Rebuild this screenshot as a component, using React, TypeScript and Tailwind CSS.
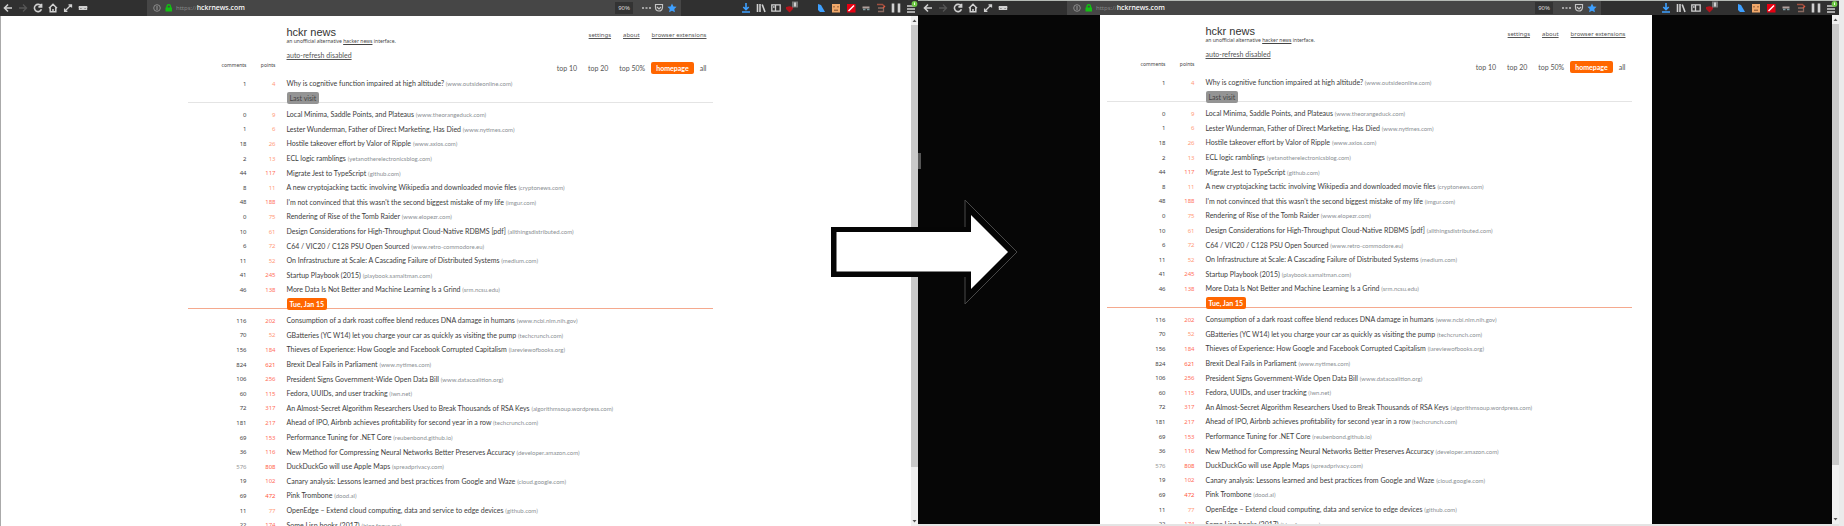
import React from "react";

type Story = [comments: number, points: number, title: string, site: string];

const fresh: Story[] = [
  [1, 4, "Why is cognitive function impaired at high altitude?", "www.outsideonline.com"],
];

const today: Story[] = [
  [0, 9, "Local Minima, Saddle Points, and Plateaus", "www.theorangeduck.com"],
  [1, 6, "Lester Wunderman, Father of Direct Marketing, Has Died", "www.nytimes.com"],
  [18, 26, "Hostile takeover effort by Valor of Ripple", "www.axios.com"],
  [2, 13, "ECL logic ramblings", "yetanotherelectronicsblog.com"],
  [44, 117, "Migrate Jest to TypeScript", "github.com"],
  [8, 11, "A new cryptojacking tactic involving Wikipedia and downloaded movie files", "cryptonews.com"],
  [48, 188, "I'm not convinced that this wasn't the second biggest mistake of my life", "imgur.com"],
  [0, 75, "Rendering of Rise of the Tomb Raider", "www.elopezr.com"],
  [10, 61, "Design Considerations for High-Throughput Cloud-Native RDBMS [pdf]", "allthingsdistributed.com"],
  [6, 72, "C64 / VIC20 / C128 PSU Open Sourced", "www.retro-commodore.eu"],
  [11, 52, "On Infrastructure at Scale: A Cascading Failure of Distributed Systems", "medium.com"],
  [41, 245, "Startup Playbook (2015)", "playbook.samaltman.com"],
  [46, 138, "More Data Is Not Better and Machine Learning Is a Grind", "srm.ncsu.edu"],
];

const tuesday: Story[] = [
  [116, 202, "Consumption of a dark roast coffee blend reduces DNA damage in humans", "www.ncbi.nlm.nih.gov"],
  [70, 52, "GBatteries (YC W14) let you charge your car as quickly as visiting the pump", "techcrunch.com"],
  [156, 184, "Thieves of Experience: How Google and Facebook Corrupted Capitalism", "lareviewofbooks.org"],
  [824, 621, "Brexit Deal Fails in Parliament", "www.nytimes.com"],
  [106, 256, "President Signs Government-Wide Open Data Bill", "www.datacoalition.org"],
  [60, 115, "Fedora, UUIDs, and user tracking", "lwn.net"],
  [72, 317, "An Almost-Secret Algorithm Researchers Used to Break Thousands of RSA Keys", "algorithmsoup.wordpress.com"],
  [181, 217, "Ahead of IPO, Airbnb achieves profitability for second year in a row", "techcrunch.com"],
  [69, 153, "Performance Tuning for .NET Core", "reubenbond.github.io"],
  [36, 116, "New Method for Compressing Neural Networks Better Preserves Accuracy", "developer.amazon.com"],
  [576, 808, "DuckDuckGo will use Apple Maps", "spreadprivacy.com"],
  [19, 102, "Canary analysis: Lessons learned and best practices from Google and Waze", "cloud.google.com"],
  [69, 472, "Pink Trombone", "dood.al"],
  [11, 77, "OpenEdge – Extend cloud computing, data and service to edge devices", "github.com"],
  [22, 174, "Some Lisp books (2017)", "blog.fogus.me"],
];

function pointsColor(points: number) {
  if (points > 400) return "text-[#ff5a3c]";
  if (points > 100) return "text-[#ff6f5c]";
  return "text-[#ff9a78]";
}

function Slot({ label, children }: { label: string; children?: React.ReactNode }) {
  return (
    <button aria-label={label} className="flex h-full w-[15px] shrink-0 items-center justify-center">
      <svg viewBox="0 0 10 10" className="size-[10px] overflow-visible" fill="none" stroke="#d0d0d0" strokeWidth="1.3">
        {children}
      </svg>
    </button>
  );
}

function Toolbar({ className }: { className: string }) {
  return (
    <div className={`flex shrink-0 items-center bg-[#303030] ${className}`}>
      <Slot label="Back"><path d="M9 5H1.5M5 1.5 1.5 5 5 8.5" strokeWidth="1.6" /></Slot>
      <Slot label="Forward"><path d="M1 5h7.5M5 1.5 8.5 5 5 8.5" stroke="#555" /></Slot>
      <Slot label="Reload"><path d="M8 3A3.6 3.6 0 1 0 8.4 6.2M8.6.8v3.1H5.4" strokeWidth="1.6" /></Slot>
      <Slot label="Home"><path d="M1 5.2 5 1.3l4 3.9M2.2 4.5v4.3h5.6V4.5M5 9V6" strokeWidth="1.5" /></Slot>
      <Slot label="Full screen"><path d="M2 8l6-6M5.5 1.8h3v2.8M1.6 5.6v2.8h2.8" strokeWidth="1.3" /></Slot>
      <Slot label="Reader"><path d="M1.5 3.8h2.8v2.4H1.5zM5.7 3.8h2.8v2.4H5.7zM.6 4.4h8.8" strokeWidth="1.4" /></Slot>
      <div className="mx-[57px] flex h-full min-w-0 flex-1 items-center bg-[#464646]">
        <svg viewBox="0 0 24 12" className="ml-[5px] h-3 w-6 shrink-0">
          <circle cx="5" cy="6" r="3.3" fill="none" stroke="#8c8c8c" />
          <path d="M5 4v4" stroke="#999" />
          <path d="M13.500 5.500h6.500v4h-6.500z" fill="#12c112" />
          <path d="M15 6V4.500a1.700 1.700 0 0 1 3.500 0V6" fill="none" stroke="#12c112" strokeWidth="1.400" />
        </svg>
        <input
          aria-label="Address"
          readOnly
          value="hckrnews.com"
          className="order-2 h-3 min-w-0 flex-1 bg-transparent font-['Noto_Sans',sans-serif] text-[7px] leading-3 font-medium text-white outline-none"
        />
        <span className="order-1 font-['Noto_Sans',sans-serif] text-[6px] leading-3 text-[#858585]">https://</span>
        <span className="order-3 mr-2 bg-[#333] px-[3px] font-['Noto_Sans',sans-serif] text-[6px] leading-3 text-[#d8d8d8]">90%</span>
        <svg viewBox="0 0 40 12" className="order-4 h-3 w-10 shrink-0">
          <path d="M1 6h2M4.500 6h2M8 6h2" stroke="#c4c4c4" strokeWidth="1.600" />
          <path d="M14.500 2.500h7v3a3.500 3.500 0 0 1-7 0zM16 5l2 2 2-2" fill="none" stroke="#c4c4c4" strokeWidth="1.200" />
          <path d="m31 1.500 1.400 2.900 3.200.4-2.300 2.200.6 3.200-2.900-1.500-2.900 1.500.6-3.200-2.300-2.200 3.200-.4z" fill="#3ea0ff" />
        </svg>
      </div>
      <Slot label="Downloads"><path d="M5 0v6M2.300 4 5 6.600 7.700 4M1 9h8" stroke="#3ea0ff" strokeWidth="1.600" /></Slot>
      <Slot label="Library"><path d="M1.500 1v8M4 1v8M6.200 1.500 9 9" strokeWidth="1.600" /></Slot>
      <Slot label="Sidebar"><path d="M.8 1.800h8.400v6.400H.8zM4.500 2v6M2 4h1.500" /></Slot>
      <Slot label="Content blocker">
        <path d="M0 4l3.500-.8L7 4v2L3.500 9.500 0 6z" fill="#b3131b" stroke="none" />
        <path d="M6-1.500h6v6H6z" fill="#777" stroke="none" />
        <path d="M9-.5v4" stroke="#fff" />
      </Slot>
      <span className="w-[15px] shrink-0" />
      <Slot label="Tagging"><path d="M2 1l3 1 4 7H4L2 7z" fill="#3ea0ff" stroke="none" /></Slot>
      <Slot label="Monkey">
        <path d="M1 1h8v8.500H1z" fill="#f0a86a" stroke="none" />
        <path d="M3 3v1.500M7 3v1.500M3 7.200h4" stroke="#7a4a2a" strokeWidth="1" />
      </Slot>
      <Slot label="Flash control">
        <path d="M1 1h8.500v8.500H1z" fill="#e60012" stroke="none" />
        <path d="M2.500 8 8 2.500" stroke="#fff" strokeWidth="1.500" />
      </Slot>
      <Slot label="Privacy">
        <path d="M1.500 4.500h7" stroke="#b0a09c" strokeWidth="2" />
        <path d="M2 6.500h2.500M6 6.500h2.500" stroke="#7d9aa0" />
      </Slot>
      <Slot label="Edit"><path d="M1 1.500h5.500l2 2" stroke="#a05040" /><path d="M2 5h5M2 8.500h5.500V5" stroke="#8a6a60" /><path d="m7 5 2-2" stroke="#e2583e" /></Slot>
      <Slot label="Pause"><path d="M2 .5v9M8 .5v9" strokeWidth="2.600" /></Slot>
      <Slot label="Menu">
        <path d="M1 3h8M1 6h8M1 9h8" />
        <circle cx="8.500" cy="1" r="2.900" fill="#6cc644" stroke="none" />
        <path d="M8.500-.5v2.500" stroke="#e8ffe0" strokeWidth="1" />
      </Slot>
    </div>
  );
}

function Stories({ rows }: { rows: Story[] }) {
  return (
    <tbody>
      {rows.map(([comments, points, title, site]) => (
        <tr key={title} className="h-[15px] nth-[5n]:h-[14px] nth-[5n-3]:h-[14px]">
          <td className={`p-0 text-right font-['Noto_Sans',sans-serif] text-[6px] ${comments === 576 ? "text-[#999]" : "text-[#444]"}`}>{comments}</td>
          <td className={`p-0 text-right font-['Noto_Sans',sans-serif] text-[6px] ${pointsColor(points)}`}>{points}</td>
          <td className="py-0 pr-0 pl-[11px] whitespace-nowrap">
            <a href="#story" className="text-[#3c3c3c]">{title}</a>{" "}
            <span className="text-[6px] text-[#8b9094]">({site})</span>
          </td>
        </tr>
      ))}
    </tbody>
  );
}

function Divider({ label, line, badge }: { label: string; line: string; badge: string }) {
  return (
    <tbody>
      <tr className="h-4">
        <td colSpan={3} className="p-0 align-top">
          <div className={`flex h-[12px] border-b pt-px pl-[99px] ${line}`}>
            <span className={`z-10 h-3 rounded-[2px] px-[3px] leading-3 whitespace-nowrap ${badge}`}>{label}</span>
          </div>
        </td>
      </tr>
    </tbody>
  );
}

function HckrNews() {
  return (
    <div className="w-full max-w-[525px] font-['Lato','Noto_Sans',sans-serif] text-[7px] leading-[12px] text-[#444]">
      <header className="flex justify-between pt-[11px] pr-[6px] pb-px pl-[99px]">
        <div>
          <h1 className="font-['Liberation_Sans',sans-serif] text-[11px] leading-[10px] text-[#333]">hckr news</h1>
          <p className="font-['Noto_Sans',sans-serif] text-[5px] leading-[8px]">
            an unofficial alternative <a href="#hn" className="underline">hacker news</a> interface.
          </p>
          <a href="#refresh" className="mt-1 block text-[#555] underline">auto-refresh disabled</a>
        </div>
        <nav className="flex gap-3 pt-[2px] font-['Noto_Sans',sans-serif] text-[6px] text-[#555]">
          <a href="#settings" className="underline">settings</a>
          <a href="#about" className="underline">about</a>
          <a href="#extensions" className="underline">browser extensions</a>
        </nav>
      </header>
      <table className="w-full table-fixed border-collapse">
        <colgroup>
          <col className="w-[59px]" />
          <col className="w-[29px]" />
          <col />
        </colgroup>
        <thead>
          <tr className="h-[14px]">
            <th className="p-0 text-right align-top font-['Noto_Sans',sans-serif] text-[5px] leading-[6px] font-normal">comments</th>
            <th className="p-0 text-right align-top font-['Noto_Sans',sans-serif] text-[5px] leading-[6px] font-normal">points</th>
            <th className="p-0 align-top font-normal">
              <nav className="flex items-center justify-end gap-[6px] pr-[6px] text-[#555]">
                <a href="#10" className="mr-[5px]">top 10</a>
                <a href="#20" className="mr-[5px]">top 20</a>
                <a href="#50">top 50%</a>
                <a href="#homepage" className="h-3 rounded-[2px] bg-[#ff6600] px-[5px] font-bold text-white">homepage</a>
                <a href="#all">all</a>
              </nav>
            </th>
          </tr>
        </thead>
        <Stories rows={fresh} />
        <Divider label="Last visit" line="border-[#e4e4e4]" badge="bg-[#949494] text-[#444]" />
        <Stories rows={today} />
        <Divider label="Tue, Jan 15" line="border-[#f5a98e]" badge="bg-[#ff6600] text-white font-bold" />
        <Stories rows={tuesday} />
      </table>
    </div>
  );
}

function Scrollbar() {
  return (
    <div className="flex w-[7px] shrink-0 flex-col items-center bg-[#f0f0f0]">
      <svg viewBox="0 0 7 9" className="h-[9px] w-[7px] shrink-0"><path d="m1.500 6 2-2.500L5.500 6z" fill="#555" /></svg>
      <div className="w-full flex-[442] bg-[#c9c9c9]" />
      <div className="flex-[50]" />
      <svg viewBox="0 0 7 9" className="h-[9px] w-[7px] shrink-0"><path d="m1.500 3 2 2.500L5.500 3z" fill="#555" /></svg>
    </div>
  );
}

function Arrow() {
  return (
    <svg viewBox="0 0 192 110" className="absolute top-[197px] left-1/2 z-20 -ml-[94px] h-[110px] w-[192px]">
      <path d="M3 30H137V3L189 55 137 107V80H3z" fill="#050505" />
      <path d="M137 30V3L189 55 137 107V80" fill="none" stroke="#484848" />
      <path d="M8.500 35H143V18L180 55 143 92V74.500H8.500z" fill="#fff" />
    </svg>
  );
}

export default function App() {
  return (
    <main className="relative grid h-screen grid-cols-[918fr_921fr_5px] overflow-hidden bg-[#ebebeb]">
      <section className="flex min-h-0 min-w-0 flex-col bg-white">
        <Toolbar className="h-4" />
        <div className="flex min-h-0 flex-1 border-l border-[#aaa]">
          <div className="flex min-w-0 flex-1 justify-center overflow-hidden pr-[12px]">
            <HckrNews />
          </div>
          <Scrollbar />
        </div>
      </section>
      <section className="relative flex min-h-0 min-w-0 flex-col border-t border-[#b5bab5] bg-[#060606]">
        <Toolbar className="h-[14px] pl-[2px] pr-px" />
        <span className="absolute top-[152px] left-0 h-4 w-[3px] bg-[#555]" />
        <div className="flex min-h-0 flex-1">
          <div className="flex min-w-0 flex-1 justify-center overflow-hidden pl-px">
            <div className="flex w-[552px] bg-white pr-[20px] pl-[7px]">
              <HckrNews />
            </div>
          </div>
          <Scrollbar />
        </div>
        <div className="h-[2px] shrink-0 bg-[#e4e4e4]" />
      </section>
      <Arrow />
    </main>
  );
}
